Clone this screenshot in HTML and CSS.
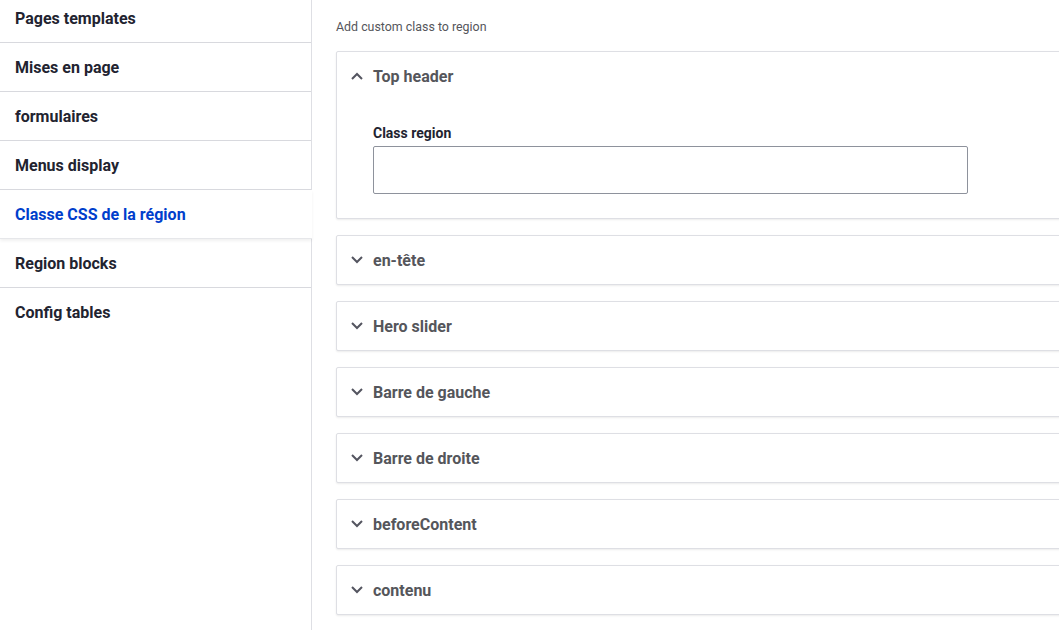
FILE: index.html
```html
<!DOCTYPE html>
<html lang="fr">
<head>
<meta charset="utf-8">
<title>Classe CSS de la région</title>
<link rel="stylesheet" href="styles.css">
</head>
<body>
<div class="layout">
  <nav class="sidebar">
    <ul class="tabs">
      <li class="tab">Pages templates</li>
      <li class="tab">Mises en page</li>
      <li class="tab">formulaires</li>
      <li class="tab">Menus display</li>
      <li class="tab active">Classe CSS de la région</li>
      <li class="tab">Region blocks</li>
      <li class="tab">Config tables</li>
    </ul>
  </nav>
  <main class="content">
    <p class="desc">Add custom class to region</p>
    <div class="card open">
      <div class="card-head">
        <svg class="chev" width="12" height="8" viewBox="0 0 12 8"><path d="M1 7 L6 2 L11 7" fill="none" stroke="#545560" stroke-width="2"/></svg>
        <span>Top header</span>
      </div>
      <div class="card-body">
        <label class="label">Class region</label>
        <input class="input" type="text">
      </div>
    </div>
    <div class="card">
      <div class="card-head"><svg class="chev" width="12" height="8" viewBox="0 0 12 8"><path d="M1 1 L6 6 L11 1" fill="none" stroke="#545560" stroke-width="2"/></svg><span>en-tête</span></div>
    </div>
    <div class="card">
      <div class="card-head"><svg class="chev" width="12" height="8" viewBox="0 0 12 8"><path d="M1 1 L6 6 L11 1" fill="none" stroke="#545560" stroke-width="2"/></svg><span>Hero slider</span></div>
    </div>
    <div class="card">
      <div class="card-head"><svg class="chev" width="12" height="8" viewBox="0 0 12 8"><path d="M1 1 L6 6 L11 1" fill="none" stroke="#545560" stroke-width="2"/></svg><span>Barre de gauche</span></div>
    </div>
    <div class="card">
      <div class="card-head"><svg class="chev" width="12" height="8" viewBox="0 0 12 8"><path d="M1 1 L6 6 L11 1" fill="none" stroke="#545560" stroke-width="2"/></svg><span>Barre de droite</span></div>
    </div>
    <div class="card">
      <div class="card-head"><svg class="chev" width="12" height="8" viewBox="0 0 12 8"><path d="M1 1 L6 6 L11 1" fill="none" stroke="#545560" stroke-width="2"/></svg><span>beforeContent</span></div>
    </div>
    <div class="card">
      <div class="card-head"><svg class="chev" width="12" height="8" viewBox="0 0 12 8"><path d="M1 1 L6 6 L11 1" fill="none" stroke="#545560" stroke-width="2"/></svg><span>contenu</span></div>
    </div>
  </main>
</div>
</body>
</html>
```

FILE: styles.css
```css
html, body {
  margin: 0;
  padding: 0;
  height: 100%;
  overflow: hidden;
  background: #fff;
  font-family: Roboto, "Noto Sans", sans-serif;
}
.layout {
  display: flex;
  height: 100%;
}
.sidebar {
  width: 311px;
  flex: none;
  border-right: 1px solid #dedfe4;
}
.tabs {
  list-style: none;
  margin: -6px 0 0 0;
  padding: 0;
}
.tab {
  height: 47px;
  padding-top: 1px;
  line-height: 48px;
  padding-left: 15px;
  border-bottom: 1px solid #d8d9de;
  font-size: 16px;
  font-weight: 700;
  color: #222330;
}
.tab:last-child {
  border-bottom: none;
}
.tab.active {
  color: #003ecc;
  margin-right: -1px;
  background: #fff;
  position: relative;
  border-bottom-color: #e6e7ea;
  box-shadow: 0 2px 3px rgba(0,0,0,0.06);
}
.content {
  flex: 1;
  padding: 0 0 0 24px;
  margin-right: -30px;
}
.desc {
  margin: 19px 0 16px;
  font-size: 12.4px;
  line-height: 16px;
  color: #55565b;
}
.card {
  border: 1px solid #dedfe4;
  border-radius: 2px;
  box-shadow: 0 1px 2px rgba(0,0,0,0.08);
  margin-bottom: 16px;
  background: #fff;
}
.card-head {
  height: 48px;
  display: flex;
  align-items: center;
  gap: 10px;
  padding-left: 14px;
  font-size: 16px;
  font-weight: 700;
  color: #55565b;
}
.chev { flex: none; }
.card-body {
  padding: 24px 0 24px 36px;
}
.label {
  display: block;
  font-size: 14px;
  font-weight: 700;
  color: #222330;
  line-height: 18px;
  margin-bottom: 4px;
}
.input {
  display: block;
  box-sizing: border-box;
  width: 595px;
  height: 48px;
  border: 1px solid #8e929c;
  border-radius: 2px;
  margin: 0;
  padding: 0 12px;
  font-size: 15px;
}
```
